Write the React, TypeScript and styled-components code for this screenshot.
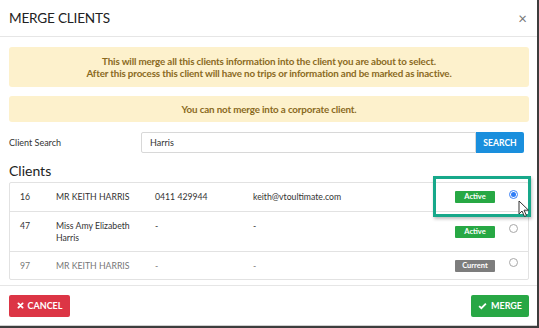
import React from "react";
import styled, { createGlobalStyle } from "styled-components";

const Global = createGlobalStyle`
  html, body { margin: 0; padding: 0; background: #3d3d3d; }
  body { font-family: Lato, "Open Sans", sans-serif; }
  * { box-sizing: border-box; }
`;

const Modal = styled.div`
  position: relative;
  width: 537px;
  height: 326px;
  background: #fff;
  border-bottom: 1px solid #cfcfcf;
  display: flex;
  flex-direction: column;
`;

const Header = styled.div`
  height: 37px;
  padding: 0 9px;
  display: flex;
  align-items: center;
  justify-content: space-between;
  border-bottom: 1px solid #e6e6e6;
`;

const Title = styled.div`
  font-size: 13.6px;
  color: #222;
  letter-spacing: -0.2px;
`;

const Close = styled.div`
  font-size: 15px;
  color: #777;
  margin-right: 1px;
  line-height: 1;
`;

const Body = styled.div`
  padding: 10px 8px 0 9px;
  display: flex;
  flex-direction: column;
`;

const Alert = styled.div<{ $h: number; $mb: number }>`
  height: ${(p) => p.$h}px;
  margin-bottom: ${(p) => p.$mb}px;
  background: #fdf1cc;
  border-radius: 3px;
  color: #8a6a1e;
  font-weight: 700;
  font-size: 9.8px;
  line-height: 12px;
  text-align: center;
  display: flex;
  flex-direction: column;
  justify-content: center;
  letter-spacing: -0.15px;
`;

const SearchRow = styled.div`
  display: flex;
  height: 21px;
  align-items: center;
`;

const Label = styled.div`
  width: 132px;
  font-size: 9px;
  color: #333;
`;

const Input = styled.div`
  width: 335px;
  height: 21px;
  border: 1px solid #d8d8d8;
  border-radius: 2px 0 0 2px;
  padding: 0 8px;
  font-size: 9px;
  color: #333;
  display: flex;
  align-items: center;
`;

const SearchButton = styled.div`
  width: 48px;
  height: 21px;
  background: #1a8fdd;
  color: #fff;
  font-weight: 700;
  font-size: 8.6px;
  display: flex;
  align-items: center;
  justify-content: center;
  border-radius: 0 2px 2px 0;
`;

const Heading = styled.div`
  font-size: 14px;
  color: #222;
  margin-top: 8px;
  height: 21px;
  line-height: 20px;
`;

const Table = styled.div`
  width: 520px;
  border: 1px solid #e2e2e2;
  border-radius: 2px;
`;

const Row = styled.div<{ $h: number; $muted?: boolean }>`
  display: grid;
  grid-template-columns: 36px 99px 98px 202px 40px 33px;
  padding-left: 10px;
  height: ${(p) => p.$h}px;
  align-items: center;
  font-size: 8.7px;
  line-height: 12px;
  color: ${(p) => (p.$muted ? "#777" : "#333")};
  & + & { border-top: 1px solid #e2e2e2; }
`;

const Cell = styled.div<{ $top?: boolean }>`
  align-self: ${(p) => (p.$top ? "start" : "center")};
  padding-top: ${(p) => (p.$top ? "8px" : "0")};
  padding-right: 12px;
`;

const Badge = styled.div<{ $kind: "active" | "current" }>`
  width: 40px;
  height: 12px;
  border-radius: 1px;
  background: ${(p) => (p.$kind === "active" ? "#27a844" : "#7d7d7d")};
  color: #fff;
  font-weight: 700;
  font-size: 7.5px;
  display: flex;
  align-items: center;
  justify-content: center;
`;

const Radio = styled.div<{ $checked?: boolean }>`
  justify-self: center;
  margin-left: 4px;
  margin-bottom: 6px;
  width: 9px;
  height: 9px;
  border-radius: 50%;
  border: 1px solid ${(p) => (p.$checked ? "#3b82f6" : "#a8a8a8")};
  background: #fff;
  display: flex;
  align-items: center;
  justify-content: center;
  &::after {
    content: "";
    width: 5px;
    height: 5px;
    border-radius: 50%;
    background: ${(p) => (p.$checked ? "#2f7df6" : "transparent")};
  }
`;

const Footer = styled.div`
  margin-top: auto;
  height: 40px;
  border-top: 1px solid #e6e6e6;
  padding: 0 8px 0 9px;
  display: flex;
  align-items: center;
  justify-content: space-between;
`;

const Button = styled.div<{ $color: string; $w: number }>`
  width: ${(p) => p.$w}px;
  height: 22px;
  background: ${(p) => p.$color};
  color: #fff;
  font-weight: 700;
  font-size: 9px;
  border-radius: 2px;
  display: flex;
  align-items: center;
  justify-content: center;
  gap: 4px;
`;

const Highlight = styled.div`
  position: absolute;
  left: 433px;
  top: 176px;
  width: 98px;
  height: 41px;
  border: 3px solid #17a88a;
  box-shadow: 1px 2px 3px rgba(0, 0, 0, 0.25);
`;

const Cursor = styled.svg`
  position: absolute;
  left: 518px;
  top: 200px;
`;

export default function App() {
  return (
    <>
      <Global />
      <Modal>
        <Header>
          <Title>MERGE CLIENTS</Title>
          <Close>×</Close>
        </Header>
        <Body>
          <Alert $h={40} $mb={9}>
            <div>This will merge all this clients information into the client you are about to select.</div>
            <div>After this process this client will have no trips or information and be marked as inactive.</div>
          </Alert>
          <Alert $h={26} $mb={10}>
            <div>You can not merge into a corporate client.</div>
          </Alert>
          <SearchRow>
            <Label>Client Search</Label>
            <Input>Harris</Input>
            <SearchButton>SEARCH</SearchButton>
          </SearchRow>
          <Heading>Clients</Heading>
          <Table>
            <Row $h={28}>
              <Cell>16</Cell>
              <Cell>MR KEITH HARRIS</Cell>
              <Cell>0411 429944</Cell>
              <Cell>keith@vtoultimate.com</Cell>
              <Badge $kind="active">Active</Badge>
              <Radio $checked />
            </Row>
            <Row $h={40}>
              <Cell $top>47</Cell>
              <Cell $top>Miss Amy Elizabeth Harris</Cell>
              <Cell $top>-</Cell>
              <Cell $top>-</Cell>
              <Badge $kind="active">Active</Badge>
              <Radio />
            </Row>
            <Row $h={28} $muted>
              <Cell>97</Cell>
              <Cell>MR KEITH HARRIS</Cell>
              <Cell>-</Cell>
              <Cell>-</Cell>
              <Badge $kind="current">Current</Badge>
              <Radio />
            </Row>
          </Table>
        </Body>
        <Footer>
          <Button $color="#dc3545" $w={61}>
            <svg width="7" height="7" viewBox="0 0 10 10">
              <path d="M2 2 L8 8 M8 2 L2 8" stroke="#fff" strokeWidth="2.6" strokeLinecap="round" />
            </svg>
            CANCEL
          </Button>
          <Button $color="#28a745" $w={58}>
            <svg width="9" height="8" viewBox="0 0 12 10">
              <path d="M1.5 5.2 L4.5 8 L10.5 1.8" stroke="#fff" strokeWidth="2.4" fill="none" />
            </svg>
            MERGE
          </Button>
        </Footer>
        <Highlight />
        <Cursor width="14" height="18" viewBox="0 0 14 18">
          <path d="M1 1 L1 14 L4 11 L6.5 16.5 L8.5 15.6 L6 10.2 L10.5 10.2 Z" fill="#fff" stroke="#333" strokeWidth="1" strokeLinejoin="round" />
        </Cursor>
      </Modal>
    </>
  );
}
